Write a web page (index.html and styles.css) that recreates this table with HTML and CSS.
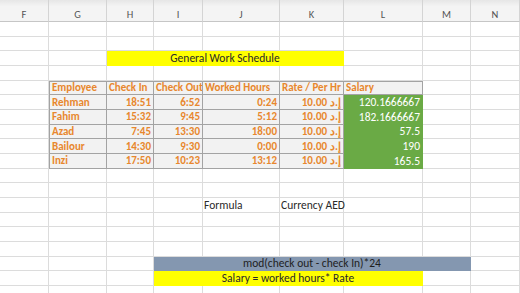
FILE: index.html
```html
<!DOCTYPE html>
<html>
<head>
<meta charset="utf-8">
<link rel="stylesheet" href="styles.css">
</head>
<body>
<div class="sheet">
  <div class="hd">F</div><div class="hd">G</div><div class="hd">H</div><div class="hd">I</div><div class="hd">J</div><div class="hd">K</div><div class="hd">L</div><div class="hd">M</div><div class="hd">N</div>

  <div class="title">General Work Schedule</div>

  <div class="t th first top" style="grid-row:6;grid-column:2">Employee</div>
  <div class="t th top" style="grid-row:6;grid-column:3">Check In</div>
  <div class="t th top" style="grid-row:6;grid-column:4">Check Out</div>
  <div class="t th top" style="grid-row:6;grid-column:5">Worked Hours</div>
  <div class="t th top" style="grid-row:6;grid-column:6">Rate / Per Hr</div>
  <div class="t th top" style="grid-row:6;grid-column:7">Salary</div>

  <div class="t first" style="grid-row:7;grid-column:2">Rehman</div>
  <div class="t num" style="grid-row:7;grid-column:3">18:51</div>
  <div class="t num" style="grid-row:7;grid-column:4">6:52</div>
  <div class="t num" style="grid-row:7;grid-column:5">0:24</div>
  <div class="t num" style="grid-row:7;grid-column:6">10.00 <span class="cur">إ.د</span></div>
  <div class="t sal" style="grid-row:7;grid-column:7">120.1666667</div>

  <div class="t first" style="grid-row:8;grid-column:2">Fahim</div>
  <div class="t num" style="grid-row:8;grid-column:3">15:32</div>
  <div class="t num" style="grid-row:8;grid-column:4">9:45</div>
  <div class="t num" style="grid-row:8;grid-column:5">5:12</div>
  <div class="t num" style="grid-row:8;grid-column:6">10.00 <span class="cur">إ.د</span></div>
  <div class="t sal" style="grid-row:8;grid-column:7">182.1666667</div>

  <div class="t first" style="grid-row:9;grid-column:2">Azad</div>
  <div class="t num" style="grid-row:9;grid-column:3">7:45</div>
  <div class="t num" style="grid-row:9;grid-column:4">13:30</div>
  <div class="t num" style="grid-row:9;grid-column:5">18:00</div>
  <div class="t num" style="grid-row:9;grid-column:6">10.00 <span class="cur">إ.د</span></div>
  <div class="t sal" style="grid-row:9;grid-column:7">57.5</div>

  <div class="t first" style="grid-row:10;grid-column:2">Bailour</div>
  <div class="t num" style="grid-row:10;grid-column:3">14:30</div>
  <div class="t num" style="grid-row:10;grid-column:4">9:30</div>
  <div class="t num" style="grid-row:10;grid-column:5">0:00</div>
  <div class="t num" style="grid-row:10;grid-column:6">10.00 <span class="cur">إ.د</span></div>
  <div class="t sal" style="grid-row:10;grid-column:7">190</div>

  <div class="t first" style="grid-row:11;grid-column:2">Inzi</div>
  <div class="t num" style="grid-row:11;grid-column:3">17:50</div>
  <div class="t num" style="grid-row:11;grid-column:4">10:23</div>
  <div class="t num" style="grid-row:11;grid-column:5">13:12</div>
  <div class="t num" style="grid-row:11;grid-column:6">10.00 <span class="cur">إ.د</span></div>
  <div class="t sal" style="grid-row:11;grid-column:7">165.5</div>

  <div class="c" style="grid-row:14;grid-column:5">Formula</div>
  <div class="c" style="grid-row:14;grid-column:6">Currency AED</div>

  <div class="formula">mod(check out - check In)*24</div>
  <div class="salary">Salary = worked hours* Rate</div>

  <i></i><i></i><i></i><i></i><i></i><i></i><i></i><i></i><i></i><i></i>
  <i></i><i></i><i></i><i></i><i></i><i></i><i></i><i></i><i></i><i></i>
  <i></i><i></i><i></i><i></i><i></i><i></i><i></i><i></i><i></i><i></i>
  <i></i><i></i><i></i><i></i><i></i><i></i><i></i><i></i><i></i><i></i>
  <i></i><i></i><i></i><i></i><i></i><i></i><i></i><i></i><i></i><i></i>
  <i></i><i></i><i></i><i></i><i></i><i></i><i></i><i></i><i></i><i></i>
  <i></i><i></i><i></i><i></i><i></i><i></i><i></i><i></i><i></i><i></i>
  <i></i><i></i><i></i><i></i><i></i><i></i><i></i><i></i><i></i><i></i>
  <i></i><i></i><i></i><i></i><i></i><i></i><i></i><i></i><i></i><i></i>
  <i></i><i></i><i></i><i></i><i></i><i></i><i></i><i></i><i></i><i></i>
  <i></i><i></i><i></i><i></i><i></i><i></i><i></i><i></i><i></i><i></i>
  <i></i><i></i><i></i><i></i><i></i><i></i><i></i><i></i><i></i><i></i>
</div>
</body>
</html>
```
FILE: styles.css
```css
html, body {
  margin: 0;
  padding: 0;
  width: 520px;
  height: 293px;
  overflow: hidden;
  background: #fff;
}
.sheet {
  display: grid;
  grid-template-columns: 49px 58px 47px 49px 77px 64px 79px 48px 49px;
  grid-template-rows: 22px repeat(19, 14.67px);
  font-family: Calibri, Carlito, "Liberation Sans Narrow", "Liberation Sans", sans-serif;
  font-size: 11.5px;
  color: #222;
}
.sheet > * {
  box-sizing: border-box;
  border-right: 1px solid #dcdcdc;
  border-bottom: 1px solid #dcdcdc;
  display: flex;
  align-items: center;
  white-space: nowrap;
  overflow: hidden;
  font-style: normal;
}
.hd {
  background: linear-gradient(#e6e6e6, #f4f4f4 30%);
  justify-content: center;
  padding-top: 7px;
  color: #555;
  font-size: 10.5px;
  border-right-color: #d4d4d4 !important;
  border-bottom-color: #c6c6c6 !important;
}
.title {
  grid-row: 4;
  grid-column: 3 / 7;
  background: #ffff00;
  justify-content: center;
  border-color: #ffff00 !important;
  color: #2a2a2a;
}
.t {
  background: #f2f2f2;
  border-right-color: #a3a3a3 !important;
  border-bottom-color: #a3a3a3 !important;
  color: #e8872d;
  font-weight: bold;
  font-size: 11px;
  padding: 0 2px;
}
.first { border-left: 1px solid #a3a3a3; }
.top { border-top: 1px solid #a3a3a3; }
.num { justify-content: flex-end; }
.cur { margin-left: 3px; }
.sal {
  background: #6aaa45;
  color: #fff;
  font-weight: normal;
  font-size: 11.5px;
  justify-content: flex-end;
  border-right-color: #6aaa45 !important;
  border-bottom-color: #6aaa45 !important;
}
.sheet > .c {
  color: #2a2a2a;
  padding: 0 1px;
  overflow: visible;
}
.formula {
  grid-row: 18;
  grid-column: 4 / 9;
  background: #8497b0;
  justify-content: center;
  border-color: #8497b0 !important;
  color: #1e1e1e;
}
.salary {
  grid-row: 19;
  grid-column: 4 / 8;
  background: #ffff00;
  justify-content: center;
  border-color: #ffff00 !important;
  color: #2a2a2a;
}
```
